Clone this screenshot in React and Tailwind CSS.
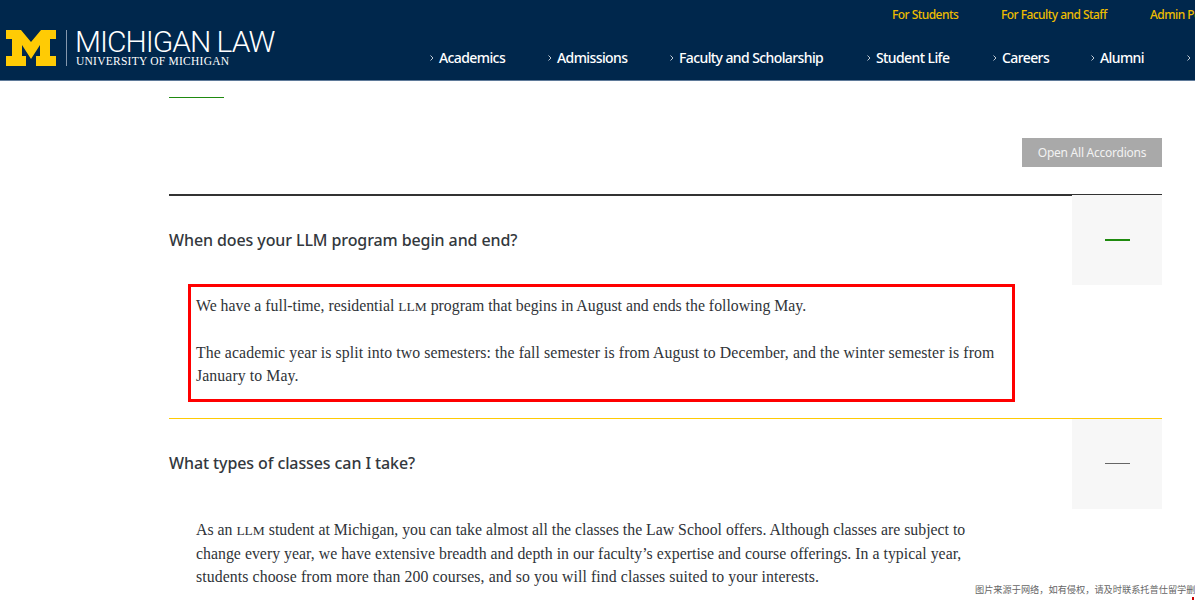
const navItems = [
  { label: "Academics", width: "w-[66px]" },
  { label: "Admissions", width: "w-[70px]" },
  { label: "Faculty and Scholarship", width: "w-[145px]" },
  { label: "Student Life", width: "w-[74px]" },
  { label: "Careers", width: "w-[46px]" },
  { label: "Alumni", width: "w-[44px]" },
];

function Chevron() {
  return (
    <span className="flex w-[9px] shrink-0 items-center">
      <svg width="4" height="6" viewBox="0 0 4 6" fill="none" stroke="#d5dbe2" strokeWidth="0.9">
        <polyline points="0.5,0.5 3,3 0.5,5.5" />
      </svg>
    </span>
  );
}

function Logo() {
  return (
    <div className="flex w-[282px] shrink-0 items-start pl-[6px] pt-[30px]">
      <svg width="50" height="36" viewBox="0 0 50 36" className="block shrink-0">
        <polygon
          fill="#ffcb05"
          points="0,0 15,0 25,12 35,0 50,0 50,9 44,9 44,26 50,26 50,36 30,36 30,26 34,26 34,15 25,29 16,15 16,26 20,26 20,36 0,36 0,26 6,26 6,9 0,9"
        />
      </svg>
      <div className="ml-[10px] mr-[9px] h-[36px] w-px shrink-0 bg-[#8497ad]"></div>
      <div className="text-white">
        <div className="-ml-px font-['Roboto',sans-serif] font-light text-[30px] leading-[23px] tracking-[-1px] whitespace-nowrap">
          MICHIGAN LAW
        </div>
        <div className="mt-[3px] font-['Liberation_Serif',serif] text-[11.5px] leading-[11px] tracking-[0.25px] whitespace-nowrap">
          UNIVERSITY OF MICHIGAN
        </div>
      </div>
    </div>
  );
}

function Header() {
  return (
    <header className="flex h-[81px] border-b border-[#5f7a99] bg-[#00274c] font-['Noto_Sans',sans-serif]">
      <Logo />
      <div className="flex-1 overflow-hidden">
        <div className="flex pl-[610px] pt-[7px] text-[12px] font-medium leading-[16px] tracking-[-0.55px] text-[#eebd00] whitespace-nowrap">
          <span className="w-[109px] shrink-0">For Students</span>
          <span className="w-[149px] shrink-0">For Faculty and Staff</span>
          <span className="shrink-0">Admin Portal</span>
        </div>
        <nav className="flex pl-[148px] pt-[25px] text-[14px] font-medium leading-[20px] text-white whitespace-nowrap">
          {navItems.map((item) => (
            <div key={item.label} className="flex shrink-0">
              <Chevron />
              <span className={`${item.width} mr-[43px] tracking-[-0.6px]`}>{item.label}</span>
            </div>
          ))}
          <Chevron />
        </nav>
      </div>
    </header>
  );
}

function AccordionRow({ title, open, children }) {
  return (
    <section>
      <div className="flex h-[90px]">
        <h3
          className={`flex-1 self-center font-['Noto_Sans',sans-serif] font-medium text-[16px] leading-[24px] tracking-[-0.1px] text-[#33383d] ${open ? "" : "pb-[2px]"}`}
        >
          {title}
        </h3>
        <div className={`flex w-[90px] items-center justify-center bg-[#f7f7f7] ${open ? "" : "pb-[2px]"}`}>
          <div className={open ? "h-[2px] w-[25px] bg-[#1f8a0f]" : "h-px w-[25px] bg-[#666666]"}></div>
        </div>
      </div>
      {children}
    </section>
  );
}

function Llm() {
  return <span className="text-[13.5px]">LLM</span>;
}

export default function App() {
  return (
    <div className="relative h-[600px] w-[1195px] overflow-hidden bg-white">
      <Header />
      <main className="ml-[169px] w-[993px]">
        <div className="mt-[16px] h-px w-[55px] bg-[#1f8a0f]"></div>
        <div className="flex justify-end pt-[40px]">
          <button className="h-[29px] w-[140px] bg-[#a9a9a9] font-['Noto_Sans',sans-serif] text-[12px] tracking-[-0.25px] text-[#f2f2f2]">
            Open All Accordions
          </button>
        </div>
        <div className="mt-[27px] border-t border-[#333333]">
          <div className="h-px w-[903px] -mb-px bg-[#333333]"></div>
          <AccordionRow title="When does your LLM program begin and end?" open>
            <div className="ml-[19px] h-[118px] w-[827px] -mt-px border-[3px] border-[#ff0000] px-[5px] pt-[7px] font-['Liberation_Serif',serif] text-[15.8px] leading-[23px] text-[#2f3338] whitespace-nowrap">
              <p>We have a full-time, residential <Llm /> program that begins in August and ends the following May.</p>
              <p className="mt-[23px] tracking-[0.09px]">
                The academic year is split into two semesters: the fall semester is from August to December, and the winter semester is from
                <br />
                January to May.
              </p>
            </div>
          </AccordionRow>
          <div className="mt-[16px] h-px bg-[#ffcb05]"></div>
          <AccordionRow title="What types of classes can I take?">
            <div className="ml-[27px] mt-[9px] font-['Liberation_Serif',serif] text-[15.8px] leading-[23px] text-[#2f3338] whitespace-nowrap">
              As an <Llm /> student at Michigan, you can take almost all the classes the Law School offers. Although classes are subject to
              <br />
              <span className="tracking-[0.03px]">
                change every year, we have extensive breadth and depth in our faculty’s expertise and course offerings. In a typical year,
              </span>
              <br />
              <span className="tracking-[0.09px]">
                students choose from more than 200 courses, and so you will find classes suited to your interests.
              </span>
            </div>
          </AccordionRow>
        </div>
      </main>
      <div className="absolute left-[975px] top-[583px] font-['Noto_Sans_CJK_SC',sans-serif] text-[9.2px] leading-[13px] text-[#666666] whitespace-nowrap">
        图片来源于网络，如有侵权，请及时联系托普仕留学删除
      </div>
      <div className="absolute left-[1192px] top-[597px] h-[3px] w-[2px] bg-[#cc0000]"></div>
    </div>
  );
}
